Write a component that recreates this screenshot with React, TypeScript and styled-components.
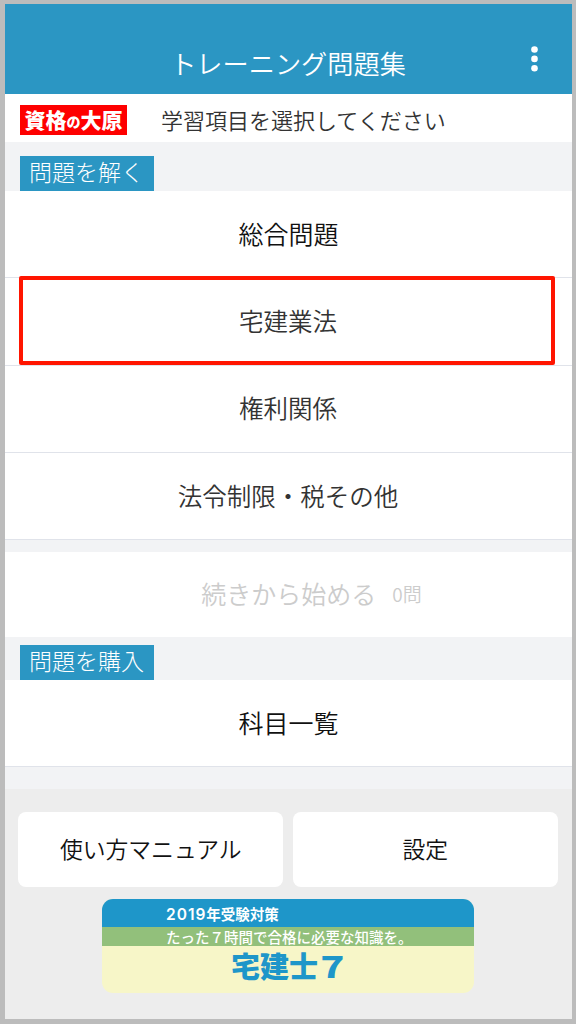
import React from "react";
import styled, { createGlobalStyle } from "styled-components";

const GlobalStyle = createGlobalStyle`
  *, *::before, *::after { box-sizing: border-box; }
  body {
    margin: 0;
    font-family: "Noto Sans CJK JP", sans-serif;
    font-weight: 350;
    color: #333;
  }
  button { font: inherit; color: inherit; border: 0; padding: 0; cursor: pointer; }
`;

const Screen = styled.div`
  display: flex;
  flex-direction: column;
  width: 576px;
  height: 1024px;
  border: solid #bcbcbc;
  border-width: 4px 4px 5px 5px;
  background: #ededed;
  white-space: nowrap;
  overflow: hidden;
`;

const Header = styled.header`
  display: grid;
  grid-template-columns: 1fr auto 1fr;
  align-items: center;
  flex: none;
  height: 90px;
  padding: 27px 34px 0 33px;
  background: #2b96c3;
  color: #fff;
`;

const Title = styled.h1`
  grid-column: 2;
  margin: 0;
  font-size: 26.2px;
  font-weight: 350;
  line-height: 38px;
`;

const MenuButton = styled.button`
  justify-self: end;
  display: flex;
  margin-top: -7px;
  background: none;
`;

const SubHeader = styled.div`
  display: flex;
  align-items: center;
  flex: none;
  height: 48px;
  padding: 4px 15px 0;
  gap: 34px;
  background: #fff;
`;

const Logo = styled.div`
  display: flex;
  align-items: center;
  justify-content: center;
  width: 107px;
  height: 30px;
  background: #fe0000;
  color: #fff;
  font-size: 21px;
  font-weight: 900;
  line-height: 28px;
  padding-bottom: 2px;
`;

const LogoSmall = styled.span`
  font-size: 14px;
  padding-top: 3px;
`;

const Instruction = styled.p`
  margin: 0;
  padding-bottom: 2px;
  font-size: 22px;
  line-height: 28px;
`;

const SectionBar = styled.div<{ $height: number }>`
  display: flex;
  align-items: flex-end;
  flex: none;
  height: ${(p) => p.$height}px;
  padding-left: 15px;
  background: #f2f3f5;
`;

const SectionTag = styled.h2`
  margin: 0;
  width: 133.5px;
  height: 35px;
  padding-left: 9px;
  background: #2b96c3;
  color: #fff;
  font-size: 23px;
  font-weight: 300;
  line-height: 31px;
`;

const Row = styled.button<{ $height?: number; $strong?: boolean; $disabled?: boolean }>`
  position: relative;
  display: flex;
  align-items: center;
  justify-content: center;
  flex: none;
  height: ${(p) => p.$height ?? 87.5}px;
  padding: 0 ${(p) => (p.$disabled ? 0 : 1)}px ${(p) => (p.$strong ? 3 : 2)}px ${(p) => (p.$disabled ? 46 : p.$strong ? 1 : 0)}px;
  border-bottom: ${(p) => (p.$disabled ? "0" : "1.5px solid #e0e3ea")};
  background: #fff;
  color: ${(p) => (p.$disabled ? "#ccc" : p.$strong ? "#111" : "#333")};
  font-size: ${(p) => (p.$strong || p.$disabled ? 25 : 24.5)}px;
`;

const Highlight = styled.span`
  position: absolute;
  top: -2px;
  left: 14px;
  width: 536px;
  height: 89px;
  border: 4px solid #ff1500;
  border-radius: 2px;
`;

const Count = styled.span`
  margin-left: 16px;
  font-size: 19px;
`;

const Band = styled.div<{ $height: number }>`
  flex: none;
  height: ${(p) => p.$height}px;
  background: #f2f3f5;
`;

const Footer = styled.footer`
  display: flex;
  flex-direction: column;
  align-items: center;
  gap: 12px;
  padding: 23px 14px 0 13px;
`;

const Actions = styled.div`
  display: grid;
  grid-template-columns: 265px 265px;
  gap: 9.5px;
`;

const ActionButton = styled.button`
  height: 75px;
  padding-bottom: 2px;
  border-radius: 8px;
  background: #fff;
  color: #111;
  font-size: 22.8px;
`;

const Banner = styled.div`
  width: 372px;
  height: 94px;
  border-radius: 11px;
  overflow: hidden;
  background: #f7f6c8;
  color: #fff;
  font-size: 14.5px;
  font-weight: 700;
`;

const BannerYear = styled.div`
  height: 28px;
  padding-left: 64px;
  background: #1e96c9;
  line-height: 30px;
`;

const YearDigits = styled.span`
  font-family: Inter, sans-serif;
  font-size: 15.5px;
  font-weight: 600;
  letter-spacing: 1px;
`;

const BannerCopy = styled.div`
  height: 19px;
  padding-left: 64px;
  background: #92c07b;
  font-weight: 500;
  line-height: 19px;
`;

const BannerName = styled.div`
  padding-left: 2px;
  color: #1e96c9;
  font-size: 29px;
  font-weight: 900;
  line-height: 39px;
  text-align: center;
`;

const WideDigit = styled.span`
  display: inline-block;
  transform: scaleX(1.25);
`;

export default function App() {
  return (
    <>
      <GlobalStyle />
      <Screen>
        <Header>
          <Title>トレーニング問題集</Title>
          <MenuButton aria-label="メニュー">
            <svg width="7" height="26" viewBox="0 0 7 26" fill="#fff">
              <circle cx="3.5" cy="3.5" r="3.3" />
              <circle cx="3.5" cy="12.9" r="3.3" />
              <circle cx="3.5" cy="22.3" r="3.3" />
            </svg>
          </MenuButton>
        </Header>
        <SubHeader>
          <Logo>
            資格<LogoSmall>の</LogoSmall>大原
          </Logo>
          <Instruction>学習項目を選択してください</Instruction>
        </SubHeader>
        <SectionBar $height={49}>
          <SectionTag>問題を解く</SectionTag>
        </SectionBar>
        <Row $strong $height={87}>総合問題</Row>
        <Row>
          宅建業法
          <Highlight />
        </Row>
        <Row>権利関係</Row>
        <Row $height={87}>法令制限・税その他</Row>
        <Band $height={11.5} />
        <Row $disabled $height={85.5}>
          続きから始める
          <Count>0問</Count>
        </Row>
        <SectionBar $height={43}>
          <SectionTag>問題を購入</SectionTag>
        </SectionBar>
        <Row $strong $height={87}>科目一覧</Row>
        <Band $height={22} />
        <Footer>
          <Actions>
            <ActionButton>使い方マニュアル</ActionButton>
            <ActionButton>設定</ActionButton>
          </Actions>
          <Banner>
            <BannerYear>
              <YearDigits>2019</YearDigits>年受験対策
            </BannerYear>
            <BannerCopy>たった７時間で合格に必要な知識を。</BannerCopy>
            <BannerName>
              宅建士<WideDigit>７</WideDigit>
            </BannerName>
          </Banner>
        </Footer>
      </Screen>
    </>
  );
}
